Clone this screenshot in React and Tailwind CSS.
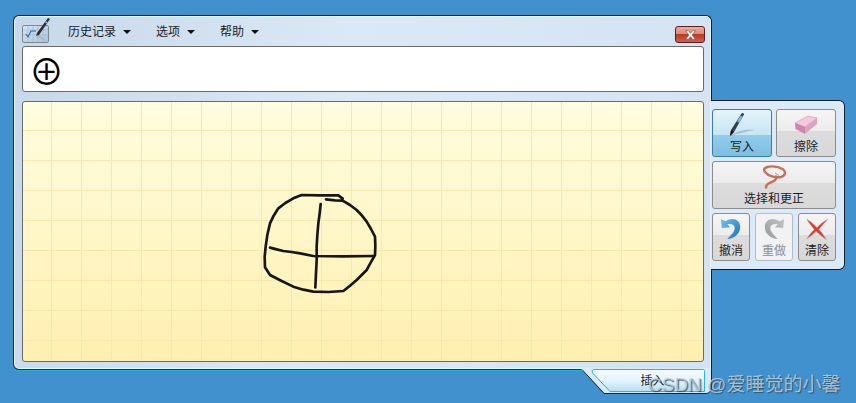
import React from 'react';

const CJK = "font-['Liberation_Sans','Noto_Sans_CJK_SC',sans-serif]";

const MenuItem = ({ label, className }) => (
    <div className={`flex items-center gap-[7px] ${className}`}>
        <span className="text-[12px] leading-none text-[#1c1c1c]">{label}</span>
        <span className="w-0 h-0 border-x-[4px] border-x-transparent border-t-[4px] border-t-[#111]" />
    </div>
);

const AppIcon = () => (
    <svg width="30" height="27" viewBox="0 0 30 27">
        <defs>
            <linearGradient id="slate" x1="0" y1="0" x2="1" y2="1">
                <stop offset="0" stopColor="#d9e6f3" />
                <stop offset="1" stopColor="#a9c2da" />
            </linearGradient>
        </defs>
        <rect x="0.5" y="8.5" width="26" height="17" rx="1.5" fill="url(#slate)" stroke="#7d8a96" />
        <path d="M6 9v16M11 9v16M16 9v16M21 9v16M1 13h25M1 18h25" stroke="#9fb8d0" strokeWidth="0.6" />
        <path d="M4 17l2 3 3-6h5" fill="none" stroke="#2f62a8" strokeWidth="1.1" />
        <path d="M14 19l3-1 11-16-2-1-11 15z" fill="#2a2d33" />
        <path d="M24 4l2 1.4-1 1.4-2-1.4z" fill="#7fb4dc" />
        <path d="M14 19l10 5-7-6z" fill="#8fa3b5" opacity="0.5" />
    </svg>
);

const PenIcon = () => (
    <svg width="28" height="26" viewBox="0 0 28 26">
        <path d="M2 24C8 20 16 17 27 18 18 19 9 22 2 24z" fill="#6f8a99" opacity="0.45" />
        <path d="M2 24l1-6L13.500 1.500c.8-1.200 2.800-.5 2.400 1L6 20z" fill="#3a3f47" />
        <path d="M12.500 3.500l2.200 1.300-3.500 6-2.200-1.300z" fill="#78b8de" />
        <path d="M3 18l3 2-4 4z" fill="#14161a" />
    </svg>
);

const EraserIcon = () => (
    <svg width="24" height="20" viewBox="0 0 24 20">
        <path d="M1 8L14 1l9 2-12 9z" fill="#f3c9dc" stroke="#c58aa8" strokeWidth="0.5" />
        <path d="M1 8l10 4v7L1.500 14z" fill="#c987ac" />
        <path d="M11 12L23 3v6L11 19z" fill="#dca3c2" />
    </svg>
);

const LassoIcon = () => (
    <svg width="25" height="24" viewBox="0 0 25 24">
        <path d="M2.500 3.500C6 .500 15 .800 20.500 4 24.500 6.500 23.500 11 19 12 13.500 13 6 11 3 7 2 5.500 2 4 2.500 3.500zM14 11.500c1 3-2 5-6.500 6.500-2 .8-3.500 2-3.500 4.500" fill="none" stroke="#c96f58" strokeWidth="2.400" strokeLinecap="round" />
        <path d="M13 8l4 2.500" stroke="#8a8a8a" strokeWidth="0.8" />
    </svg>
);

const UndoIcon = ({ id, from, to }) => (
    <svg width="22" height="24" viewBox="0 0 24 26">
        <defs>
            <linearGradient id={id} x1="0" y1="0" x2="1" y2="1">
                <stop offset="0" stopColor={from} />
                <stop offset="1" stopColor={to} />
            </linearGradient>
        </defs>
        <path d="M1 2l1 10 9-1-3-3c4-1 8 0 8 4 0 4-4 8-8 12 8-1 14-6 14-13C22 3 14-.5 6 4.500z" fill={`url(#${id})`} />
    </svg>
);

const ClearIcon = () => (
    <svg width="24" height="23" viewBox="0 0 26 24">
        <path d="M2 1c5 3 8 6 11 9 3-3 7-7 12-9-4 4-8 8-10 11 3 3 6 7 8 11-4-3-8-6-11-9-3 3-6 6-10 8 2-3 5-7 8-10C7 8 4 5 2 1z" fill="#de3a2a" stroke="#a8a8a8" strokeWidth="0.5" />
    </svg>
);

const ToolButton = ({ icon, label, className, active, disabled }) => {
    const tone = active
        ? 'border-[#3a7dac] bg-[linear-gradient(#e4f4fb_0%,#c6e5f4_54%,#92cdeb_54%,#7dbde2_100%)]'
        : disabled
            ? 'border-[#b3bcc6] bg-[#f0f2f4]'
            : 'border-[#8c8c8c] bg-[linear-gradient(#f5f5f5_0%,#ececec_46%,#dcdcdc_46%,#d8d8d8_100%)]';
    return (
        <div className={`flex flex-col items-center border rounded-[3px] ${tone} ${className}`}>
            <div className="flex-1 flex items-center justify-center min-h-0">{icon}</div>
            <span className={`text-[12px] leading-[14px] pb-[2px] ${disabled ? 'text-[#8f8f8f]' : 'text-[#1c1c1c]'}`}>{label}</span>
        </div>
    );
};

const Scribble = () => (
    <svg className="absolute left-[227px] top-[78px]" width="140" height="125" viewBox="0 0 420 375" fill="none" stroke="#161616" strokeWidth="8" strokeLinejoin="round" strokeLinecap="round">
        <path d="M228 58L255 61L278 62L300 75L320 90L336 107L350 125L363 147L375 170L376 198L375 225L362 248L350 270L335 285L320 300L300 317L280 333L235 336L190 335L160 329L130 320L95 303L60 285L45 262L44 230L47 200L52 165L60 130L71 107L85 85L106 69L130 55L155 45L210 46L265 46L278 56" />
        <path d="M212 72L209 100L205 130L202 165L200 200L200 240L198 280L196 322" />
        <path d="M60 203L80 208L100 213L125 216L150 220L190 228L280 229L370 228" />
    </svg>
);

export default function App() {
    return (
        <div className={`relative w-[856px] h-[403px] overflow-hidden bg-[#4191cf] flex items-start pl-[13px] pt-[15px] ${CJK}`}>
            <div className="w-[699px] flex flex-col shrink-0">
                {/* ventana principal */}
                <div className="relative h-[355px] border border-[#10202c] border-b-[#063a52] rounded-[6px] rounded-br-none px-[8px] flex flex-col bg-[linear-gradient(100deg,#c6d8ea_0%,#dbe8f6_45%,#d3e3f3_100%)] shadow-[inset_0_0_0_1px_#eaf3fc,0_1px_0_#19b5e0]">
                    <div className="h-[30px] flex items-center shrink-0 pt-[1px]">
                        <div className="w-[31px] -mt-[3px]"><AppIcon /></div>
                        <MenuItem label="历史记录" className="ml-[15px]" />
                        <MenuItem label="选项" className="ml-[25px]" />
                        <MenuItem label="帮助" className="ml-[25px]" />
                        <div className="ml-auto mr-[-2px] mt-[6px] w-[30px] h-[17px] rounded-[3px] border border-[#5a1f22] bg-[linear-gradient(#eaaa9c_0%,#dd8c7a_45%,#b93b26_50%,#d0614a_100%)] flex items-center justify-center">
                            <svg width="13" height="10" viewBox="0 0 11 9">
                                <path d="M1 0.5h2.500L5.500 3l2-2.500H10L7 4.500l3 4H7.500l-2-2.500-2 2.500H1l3-4z" fill="#fff" stroke="#6b3a36" strokeWidth="0.5" />
                            </svg>
                        </div>
                    </div>
                    <div className="h-[46px] -mr-px shrink-0 bg-white border border-[#6a6a6a] rounded-[3px] flex items-center pl-[6px]">
                        <span className="font-['Noto_Sans_CJK_SC',sans-serif] text-[35px] leading-none text-black">⊕</span>
                    </div>
                    <div className="relative mt-[9px] h-[261px] -mr-px shrink-0 border border-[#6a6a6a] rounded-[3px] bg-[linear-gradient(90deg,#f9e7ae_1px,transparent_1px),linear-gradient(#f9e7ae_1px,transparent_1px),linear-gradient(#fffde0,#fff0b0)] bg-[size:30px_30px,30px_30px,100%_100%] bg-[position:28px_0,0_28px,0_0]">
                        <Scribble />
                    </div>
                </div>

                {/* pestaña Insertar */}
                <div className="relative self-end -mt-[2px] w-[131px] h-[27px] flex items-center justify-center">
                    <svg className="absolute inset-0" width="131" height="27" viewBox="0 0 131 27">
                        <defs>
                            <linearGradient id="tab" x1="0" y1="0" x2="0" y2="1">
                                <stop offset="0" stopColor="#f4fbff" />
                                <stop offset="0.5" stopColor="#e4f4fd" />
                                <stop offset="1" stopColor="#b5dff6" />
                            </linearGradient>
                        </defs>
                        <path d="M0.5 2H1L24 25.500H125C128 25.500 130.500 23 130.500 20V0H0z" fill="#dbe9f9" />
                        <path d="M1 1.500L23 25.500H125C128 25.500 130.500 23 130.500 20V0" fill="none" stroke="#0a2a3c" />
                        <path d="M13 1.500H122C123 1.500 123.500 2 123.500 3V23.500H29L12 5.500C10.500 3.500 11 1.500 13 1.500z" fill="url(#tab)" stroke="#25b6e6" />
                    </svg>
                    <span className="relative text-[12px] leading-none text-[#1c1c1c] ml-[12px] -mt-[2px]">插入</span>
                </div>
            </div>

            {/* panel lateral */}
            <div className="-ml-px mt-[85px] w-[134px] h-[170px] shrink-0 border border-l-0 border-[#10202c] rounded-r-[6px] bg-[#dbe9f9] pl-[1px] pr-[8px] pt-[8px] flex flex-col gap-[4px] relative">
                <div className="flex gap-[4px]">
                    <ToolButton icon={<PenIcon />} label="写入" active className="w-[60px] h-[48px]" />
                    <ToolButton icon={<EraserIcon />} label="擦除" className="w-[60px] h-[48px]" />
                </div>
                <ToolButton icon={<LassoIcon />} label="选择和更正" className="w-[124px] h-[48px]" />
                <div className="flex justify-between w-[124px]">
                    <ToolButton icon={<UndoIcon id="undo" from="#6fc4ee" to="#1f6fb8" />} label="撤消" className="w-[38px] h-[48px]" />
                    <ToolButton icon={<div className="-scale-x-100"><UndoIcon id="redo" from="#c4c4c4" to="#989898" /></div>} label="重做" disabled className="w-[38px] h-[48px]" />
                    <ToolButton icon={<ClearIcon />} label="清除" className="w-[38px] h-[48px]" />
                </div>
            </div>

            <span className="absolute left-[648px] top-[374px] text-[19px] leading-[22px] text-[#c5d3df]/80 [text-shadow:1px_1px_1px_#33536b] whitespace-nowrap">CSDN @爱睡觉的小馨</span>
        </div>
    );
}
